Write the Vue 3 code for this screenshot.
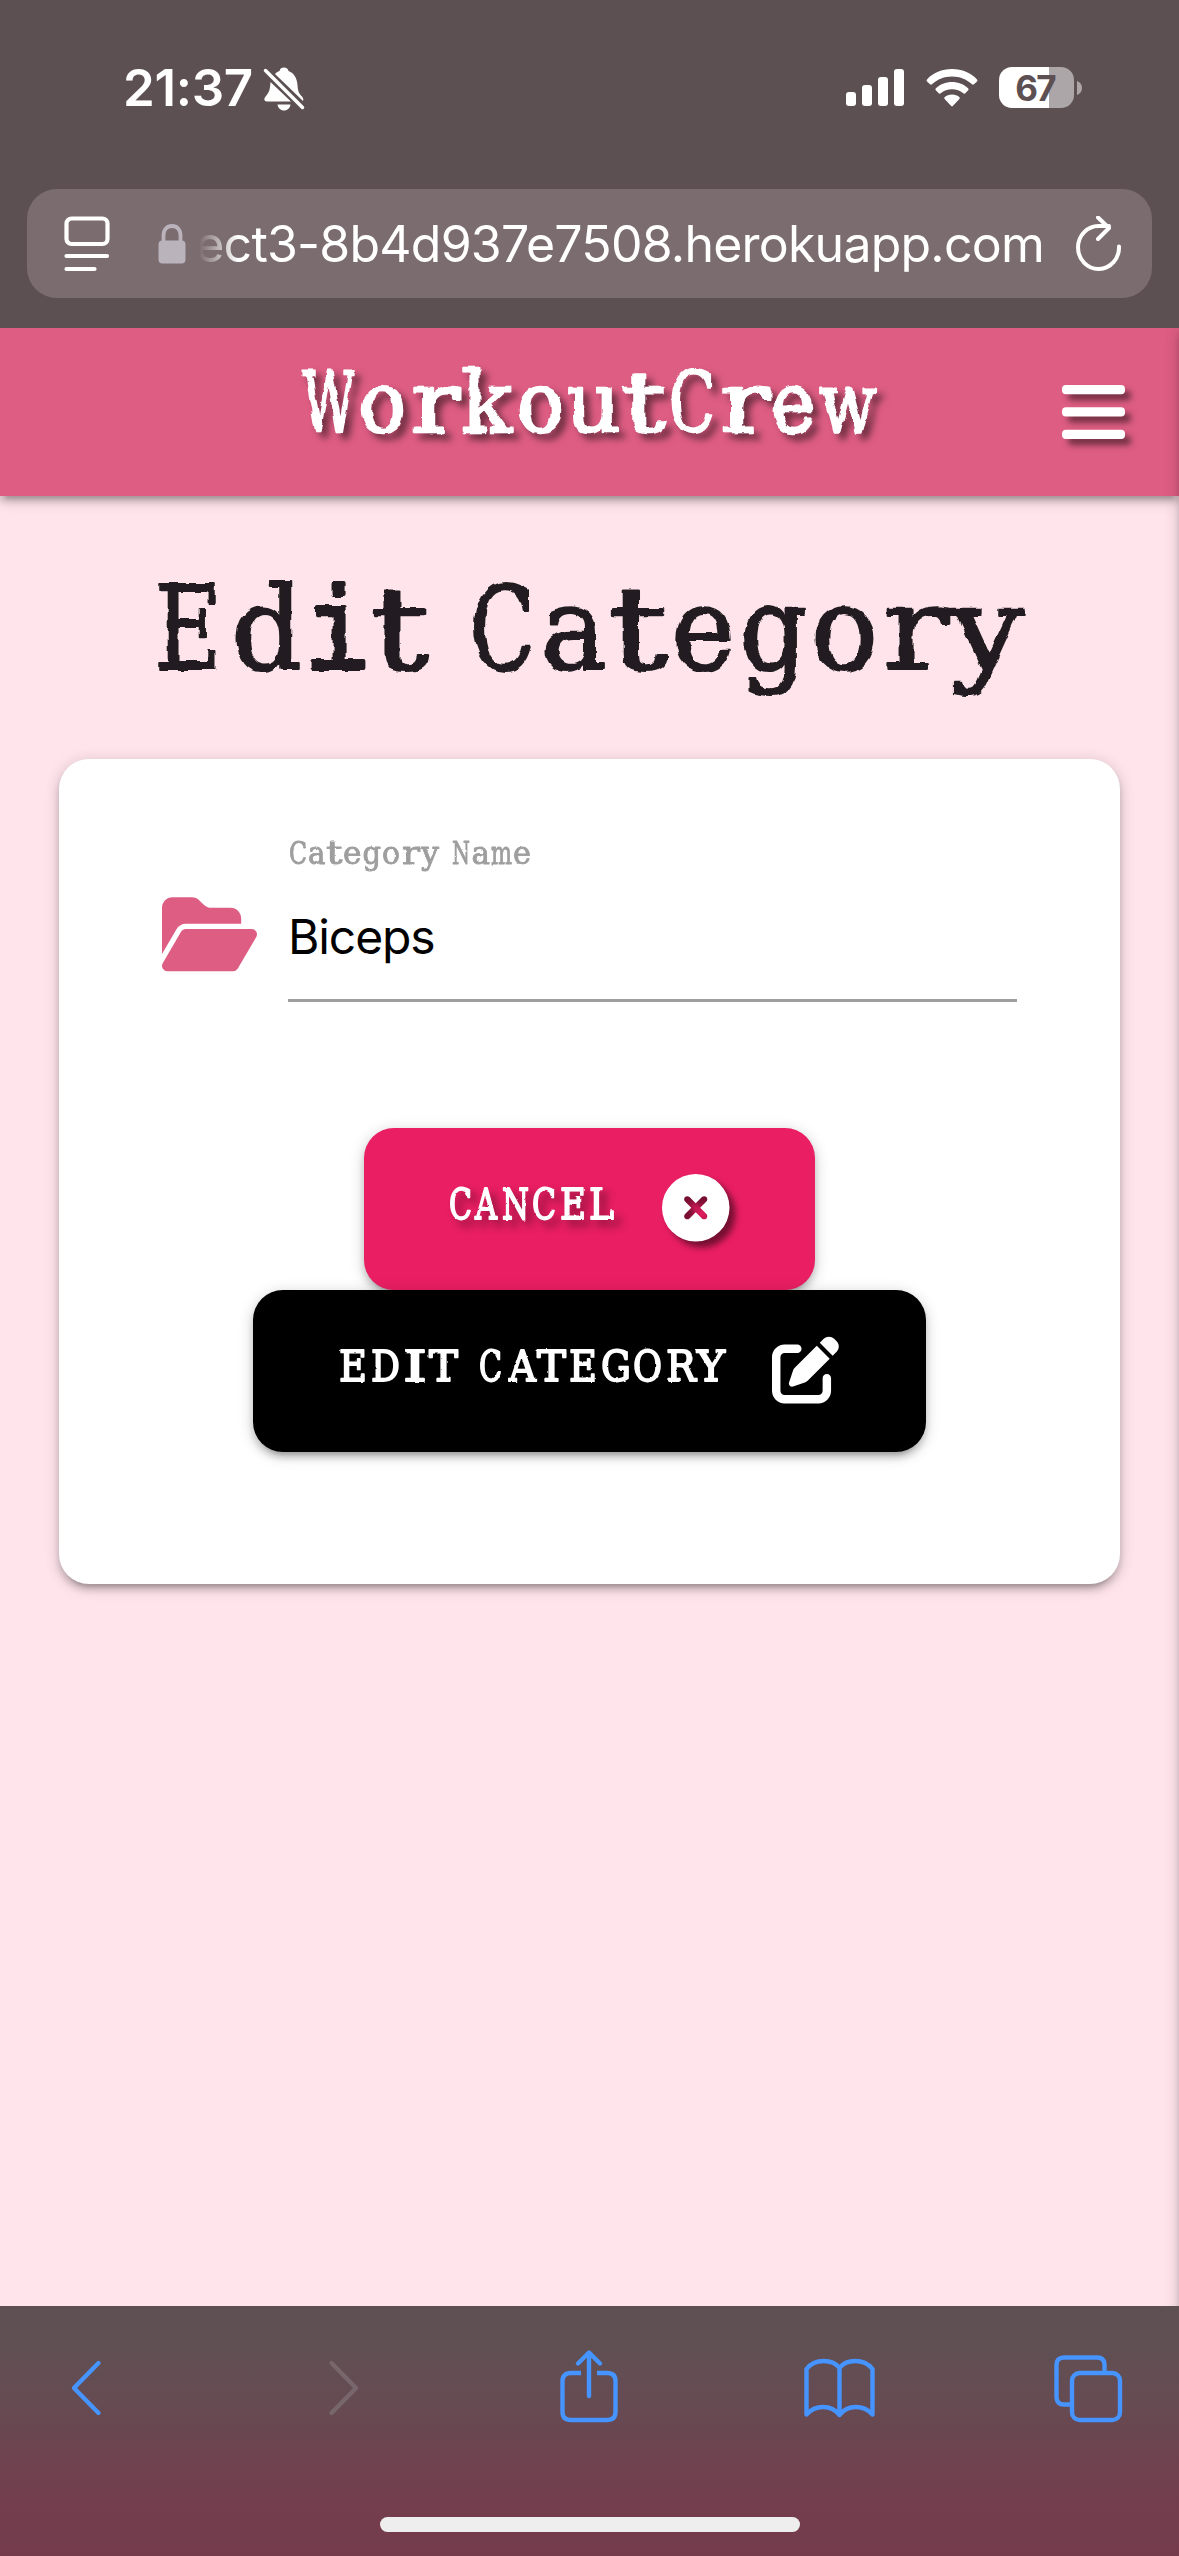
<script setup>
import { h } from 'vue'

// Typewriter lettering: every glyph is set to its own left/right bounds on the line.
const TypeLine = (props) =>
  h(
    'svg',
    { width: props.width, height: props.height, viewBox: `0 0 ${props.width} ${props.height}`, role: 'img', 'aria-label': props.text, style: { overflow: 'visible', display: 'block', flex: 'none' } },
    [
      h(
        'text',
        { y: props.base, 'font-size': props.size, filter: props.rough ? `url(#${props.rough})` : undefined },
        [...props.text].map((c, i) => {
          const [l, r] = props.spans[i]
          return h('tspan', { x: l, textLength: r - l, lengthAdjust: 'spacingAndGlyphs', class: c === 'i' ? 'slab' : undefined }, c)
        })
      )
    ]
  )
TypeLine.props = ['text', 'spans', 'size', 'base', 'width', 'height', 'rough']

const brand = [[0, 53], [57, 104], [109, 158], [159, 210], [215, 262], [264, 319], [320, 364], [367, 413], [418, 467], [469, 513], [517, 575]]
const heading = [[0, 67], [77, 148], [150, 214], [215, 274], [276, 310], [315, 380], [386, 452], [453, 513], [517, 580], [585, 652], [656, 723], [728, 794], [796, 869]]
const label = [[0, 18], [19, 36.500], [37, 53.500], [54, 72.500], [73.500, 92], [93, 111], [113, 131], [132, 150], [151, 161], [163, 181], [182.500, 201], [202, 223], [224, 242]]
const cancel = [[0, 23], [26, 48], [53, 80], [83, 107], [111, 137], [140, 165]]
const edit = [[0, 28], [32, 61], [64, 88], [90, 119], [120, 139], [140, 163], [170, 197], [198, 227], [230, 258], [262, 292], [294, 323], [327, 357], [358, 386]]
</script>

<template>
  <div class="phone">
    <svg class="defs" width="0" height="0" aria-hidden="true">
      <filter id="rough" x="-5%" y="-20%" width="110%" height="140%">
        <feTurbulence type="fractalNoise" baseFrequency="0.08" numOctaves="2" seed="4" />
        <feDisplacementMap in="SourceGraphic" scale="5" xChannelSelector="R" yChannelSelector="G" />
      </filter>
      <filter id="rough-small" x="-5%" y="-20%" width="110%" height="140%">
        <feTurbulence type="fractalNoise" baseFrequency="0.2" numOctaves="2" seed="7" />
        <feDisplacementMap in="SourceGraphic" scale="2" xChannelSelector="R" yChannelSelector="G" />
      </filter>
    </svg>

    <div class="chrome-top">
      <div class="status">
        <span class="time">21:37</span>
        <svg class="bell" width="42" height="46" viewBox="0 0 42 46">
          <g fill="#fff">
            <path d="M12 8C13 6.500 15 5.500 16.500 5C17 2.500 18.500 1.500 21 1.500C23.500 1.500 25 3 25.500 5C31 7 34 12 34.500 19C34.800 25 36 27.500 39 30.500C40.200 32 40.700 33.500 40 35Z" />
            <path d="M7.500 16L28 35.500H4C1 35.500 .500 32.500 3 30C6.500 26 7 23 7.500 16Z" />
            <path d="M14.500 38.500H27.500C27 42 24.500 44.500 21 44.500S15 42 14.500 38.500Z" />
          </g>
          <path d="M2 4.500L39.500 41.500" stroke="#5d5053" stroke-width="7" />
          <path d="M2.500 4.500L39.500 41.500" stroke="#fff" stroke-width="3.500" stroke-linecap="round" />
        </svg>
        <svg class="signal" width="58" height="37" viewBox="0 0 58 37" fill="#fff">
          <rect y="23" width="10" height="14" rx="3" /><rect x="16" y="16" width="10" height="21" rx="3" />
          <rect x="32" y="8" width="10" height="29" rx="3" /><rect x="48" width="10" height="37" rx="3" />
        </svg>
        <svg class="wifi" width="52" height="38" viewBox="0 0 52 38" fill="#fff">
          <path d="M26 0C36 0 45 3.700 51 10.500Q52 11.500 51 12.500L48 15.300Q47 16 46 15.200C40.500 10.200 33.500 7.500 26 7.500S11.500 10.200 6 15.200Q5 16 4 15.300L1 12.500Q0 11.500 1 10.500C7 3.700 16 0 26 0Z" />
          <path d="M26 13C32.400 13 38 15.300 42.300 19.400Q43 20.300 42.200 21.200L39 24.400Q38.200 25 37.300 24.300C34.200 21.600 30.300 20.200 26 20.200S17.800 21.600 14.700 24.300Q13.800 25 13 24.400L9.800 21.200Q9 20.300 9.700 19.400C14 15.300 19.600 13 26 13Z" />
          <path d="M26 25.500C29 25.500 31.500 26.500 33.500 28.200Q34.200 29 33.400 29.900L27 36.700Q26 37.700 25 36.700L18.600 29.900Q17.800 29 18.500 28.200C20.500 26.500 23 25.500 26 25.500Z" />
        </svg>
        <div class="battery"><span>67</span></div>
        <svg class="nub" width="5" height="14" viewBox="0 0 5 14"><path d="M0 0Q5 2 5 7T0 14Z" fill="#ada6a8" /></svg>
      </div>
      <div class="urlbar">
        <svg class="reader" width="46" height="56" viewBox="0 0 46 56" fill="none" stroke="#fff" stroke-width="4.200" stroke-linecap="round">
          <rect x="2.500" y="2.500" width="41" height="25.500" rx="5" /><path d="M2.500 40H43M2.500 53H30.500" />
        </svg>
        <svg class="lock" width="28" height="40" viewBox="0 0 28 40">
          <path d="M5.500 18V11.500C5.500 5.500 9 2 14 2S22.500 5.500 22.500 11.500V18" fill="none" stroke="#bbb3bc" stroke-width="3.800" />
          <rect x=".500" y="16.500" width="27" height="23" rx="4" fill="#bbb3bc" />
        </svg>
        <div class="url"><span>ect3-8b4d937e7508.herokuapp.com</span></div>
        <svg class="reload" width="46" height="56" viewBox="0 0 46 56" fill="none" stroke="#fff" stroke-width="4" stroke-linecap="round" stroke-linejoin="round">
          <path d="M43 30.500A20.500 21.500 0 1 1 23 10H33M22 1.500L33 12L22 23" />
        </svg>
      </div>
    </div>

    <main class="page">
      <header class="nav">
        <TypeLine class="brand" text="WorkoutCrew" :spans="brand" :size="84" :base="103.500" :width="576" :height="168" rough="rough" />
        <svg class="menu" width="63" height="54" viewBox="0 0 63 54" fill="#fff">
          <rect width="63" height="9.300" rx="4" /><rect y="22.300" width="63" height="9.300" rx="4" /><rect y="44.700" width="63" height="9.300" rx="4" />
        </svg>
      </header>
      <h1 class="title">
        <TypeLine text="Edit Category" :spans="heading" :size="116" :base="90" :width="869" :height="120" rough="rough" />
      </h1>
      <section class="card">
        <div class="field">
          <svg class="folder" width="95" height="84.500" viewBox="0 0 576 512" fill="#de5d83">
            <path d="M88.700 223.800L0 375.800 0 96C0 60.700 28.700 32 64 32l117.500 0c17 0 33.300 6.700 45.300 18.700l26.500 26.500c12 12 28.300 18.700 45.300 18.700L416 96c35.300 0 64 28.700 64 64l0 32-336 0c-22.800 0-43.800 12.100-55.300 31.800zm27.600 16.100C122.100 230 132.600 224 144 224l400 0c11.500 0 22 6.100 27.700 16.100s5.700 22.200-.1 32.100l-112 192C453.900 474 443.400 480 432 480L32 480c-11.500 0-22-6.100-27.700-16.100s-5.700-22.200 .1-32.100l112-192z" />
          </svg>
          <div class="control">
            <TypeLine class="label" text="Category Name" :spans="label" :size="32" :base="25.500" :width="242" :height="34" rough="rough-small" />
            <div class="value">Biceps</div>
          </div>
        </div>
        <div class="actions">
          <button class="btn cancel">
            <TypeLine class="btn-text" text="CANCEL" :spans="cancel" :size="43" :base="90.500" :width="165" :height="162" rough="rough-small" />
            <svg class="btn-icon" width="67.500" height="67.500" viewBox="0 0 512 512" fill="#fff">
              <path d="M256 512A256 256 0 1 0 256 0a256 256 0 1 0 0 512zM175 175c9.400-9.400 24.600-9.400 33.900 0l47 47 47-47c9.400-9.400 24.600-9.400 33.900 0s9.400 24.600 0 33.900l-47 47 47 47c9.400 9.400 9.400 24.600 0 33.900s-24.600 9.400-33.900 0l-47-47-47 47c-9.400 9.400-24.600 9.400-33.900 0s-9.400-24.600 0-33.900l47-47-47-47c-9.400-9.400-9.400-24.600 0-33.900z" />
            </svg>
          </button>
          <button class="btn edit">
            <TypeLine class="btn-text" text="EDIT CATEGORY" :spans="edit" :size="43" :base="90.500" :width="386" :height="162" rough="rough-small" />
            <svg class="btn-icon" width="67.500" height="67.500" viewBox="0 0 512 512" fill="#fff">
              <path d="M471.600 21.700c-21.900-21.900-57.300-21.900-79.200 0L362.300 51.700l97.900 97.900 30.100-30.100c21.900-21.900 21.900-57.300 0-79.200L471.600 21.700zm-299.200 220c-6.100 6.100-10.800 13.600-13.500 21.900l-29.600 88.800c-2.900 8.600-.6 18.100 5.800 24.600s15.900 8.700 24.600 5.800l88.800-29.600c8.200-2.700 15.700-7.400 21.900-13.500L437.700 172.300 339.700 74.300 172.400 241.700zM96 64C43 64 0 107 0 160L0 416c0 53 43 96 96 96l256 0c53 0 96-43 96-96l0-96c0-17.700-14.300-32-32-32s-32 14.300-32 32l0 96c0 17.700-14.300 32-32 32L96 448c-17.700 0-32-14.300-32-32l0-256c0-17.700 14.300-32 32-32l96 0c17.700 0 32-14.300 32-32s-14.300-32-32-32L96 64z" />
            </svg>
          </button>
        </div>
      </section>
      <div class="drawer"></div>
    </main>

    <footer class="toolbar">
      <nav class="tools">
        <svg viewBox="0 0 80 80"><path d="M52.500 17L28 42L52.500 67" /></svg>
        <svg class="off" viewBox="0 0 80 80"><path d="M34.500 17L59 42L34.500 67" /></svg>
        <svg viewBox="0 0 80 80"><path d="M34 27H24Q15.500 27 15.500 35V66Q15.500 74 24 74H60Q68.500 74 68.500 66V35Q68.500 27 60 27H50" stroke-linecap="butt" /><path d="M42 50V7M31 17.500L42 6.500L53 17.500" /></svg>
        <svg viewBox="0 0 80 80"><path d="M41.500 22C35 13 17 12 8.500 23V68.500C17 59 33 58 41.500 69C50 58 66 59 74.500 68.500V23C66 12 48 13 41.500 22V69" /></svg>
        <svg viewBox="0 0 80 80"><path d="M22 58.500H16Q8.500 58.500 8.500 51V19Q8.500 11.500 16 11.500H49Q56.500 11.500 56.500 19V25" stroke-linecap="butt" /><rect x="24" y="27" width="48" height="47" rx="7.500" /></svg>
      </nav>
      <div class="home"></div>
    </footer>
  </div>
</template>

<style>
body { margin: 0; }
</style>

<style scoped>
.phone { width: 1179px; height: 2556px; display: flex; flex-direction: column; overflow: hidden; font-family: Inter, "Liberation Sans", sans-serif; background: #ffe4ec; }
.phone :deep(text) { font-family: "DejaVu Serif", "Liberation Serif", serif; font-weight: 400; font-kerning: none; fill: currentColor; stroke: currentColor; stroke-width: 1.8px; stroke-linejoin: round; }
.phone :deep(.slab) { font-family: "Liberation Mono", monospace; stroke-width: 4px; }
.defs { position: absolute; }
.chrome-top { height: 328px; flex: none; background: #5d5053; color: #fff; box-sizing: border-box; padding: 0 27px; position: relative; z-index: 2; }
.status { height: 189px; display: flex; align-items: flex-start; padding: 66px 0 0 96px; box-sizing: border-box; }
.time { font-size: 51px; line-height: 44px; font-weight: 600; width: 140px; white-space: nowrap; letter-spacing: -0.3px; }
.signal { margin: 3px 0 0 541px; }
.wifi { margin: 3px 0 0 22px; }
.battery { width: 75px; height: 41px; margin: 1px 3px 0 21px; border-radius: 13px; background: linear-gradient(90deg, #fff 50px, #ada6a8 50px); color: #5d5053; font-size: 35px; line-height: 42px; font-weight: 700; text-align: center; letter-spacing: -1.8px; text-indent: -3px; }
.nub { margin-top: 15px; }
.urlbar { height: 109px; border-radius: 30px; background: #7b6c70; display: flex; align-items: center; padding: 0 30px 0 37px; }
.reader { margin-left: 0; }
.lock { margin: 0 0 0 48px; }
.url { margin-left: 7px; width: 851px; display: flex; justify-content: flex-end; font-size: 50px; line-height: 70px; letter-spacing: -0.78px; white-space: nowrap; overflow: hidden; -webkit-mask-image: linear-gradient(90deg, transparent 6px, #000 45px); mask-image: linear-gradient(90deg, transparent 6px, #000 45px); }
.reload { margin-left: 32px; }
.page { flex: 1; position: relative; overflow: hidden; display: flex; flex-direction: column; align-items: center; }
.nav { width: 1179px; height: 168px; flex: none; box-sizing: border-box; padding: 0 54px 0 302px; background: #de5d83; color: #fff; display: flex; justify-content: space-between; box-shadow: 0 6px 6px rgba(0,0,0,.14), 0 9px 3px -6px rgba(0,0,0,.12), 0 3px 15px rgba(0,0,0,.2); }
.brand { filter: drop-shadow(6px 6px 3.500px rgba(0,0,0,.5)); }
.brand :deep(text) { stroke-width: 2.400px; }
.menu { margin-top: 57px; overflow: visible; filter: drop-shadow(6px 6px 3px rgba(0,0,0,.5)); }
.title { margin: 83px 0 0; width: 869px; height: 180px; color: #211f20; }
.title :deep(text) { stroke-width: 2.200px; }
.card { width: 1061px; height: 825px; box-sizing: border-box; background: #fff; border-radius: 30px; box-shadow: 0 6px 6px rgba(0,0,0,.14), 0 9px 3px -6px rgba(0,0,0,.12), 0 3px 15px rgba(0,0,0,.2); padding: 79px 103px 0; }
.field { display: flex; }
.folder { margin-top: 54px; }
.control { margin-left: 31px; width: 729px; height: 161px; border-bottom: 3px solid #9e9e9e; }
.label { margin-left: 1px; color: #9e9e9e; }
.label :deep(text) { stroke-width: .9px; }
.value { margin-top: 33px; height: 64px; line-height: 64px; font-size: 48px; letter-spacing: -1.1px; color: #000; }
.actions { margin-top: 126px; display: flex; flex-direction: column; align-items: center; }
.btn { height: 162px; border: 0; border-radius: 30px; display: flex; align-items: center; color: #fff; box-shadow: 0 6px 6px rgba(0,0,0,.14), 0 9px 3px -6px rgba(0,0,0,.12), 0 3px 15px rgba(0,0,0,.2); }
.btn.cancel { background: #e91e63; padding: 0 85.500px 0 85px; gap: 48px; }
.btn.edit { background: #000; padding: 0 87px 0 86px; gap: 46.500px; }
.btn-text { filter: drop-shadow(6px 6px 4px rgba(0,0,0,.4)); }
.btn-icon { margin-top: -2px; overflow: visible; filter: drop-shadow(6px 6px 3px rgba(0,0,0,.5)); }
.edit .btn-text, .edit .btn-icon { filter: none; }
.drawer { position: absolute; left: 1181px; top: 0; width: 300px; height: 2400px; box-shadow: 0 6px 6px rgba(0,0,0,.14), 0 9px 3px -6px rgba(0,0,0,.12), 0 3px 15px rgba(0,0,0,.3); }
.toolbar { height: 250px; flex: none; position: relative; background: linear-gradient(#5d5053 0, #604f53 45px, #664b52 100px, #6f424e 160px, #743d4d 210px, #733b4b 250px); }
.tools { display: flex; justify-content: space-between; padding: 40px 51px 0 46px; }
.tools svg { width: 80px; height: 80px; overflow: visible; fill: none; stroke: #4694ff; stroke-width: 4.400px; stroke-linecap: round; stroke-linejoin: round; }
.tools .off { stroke: #77676d; }
.home { width: 420px; height: 15px; border-radius: 8px; background: #eee; margin: 91px auto 0; }
</style>
